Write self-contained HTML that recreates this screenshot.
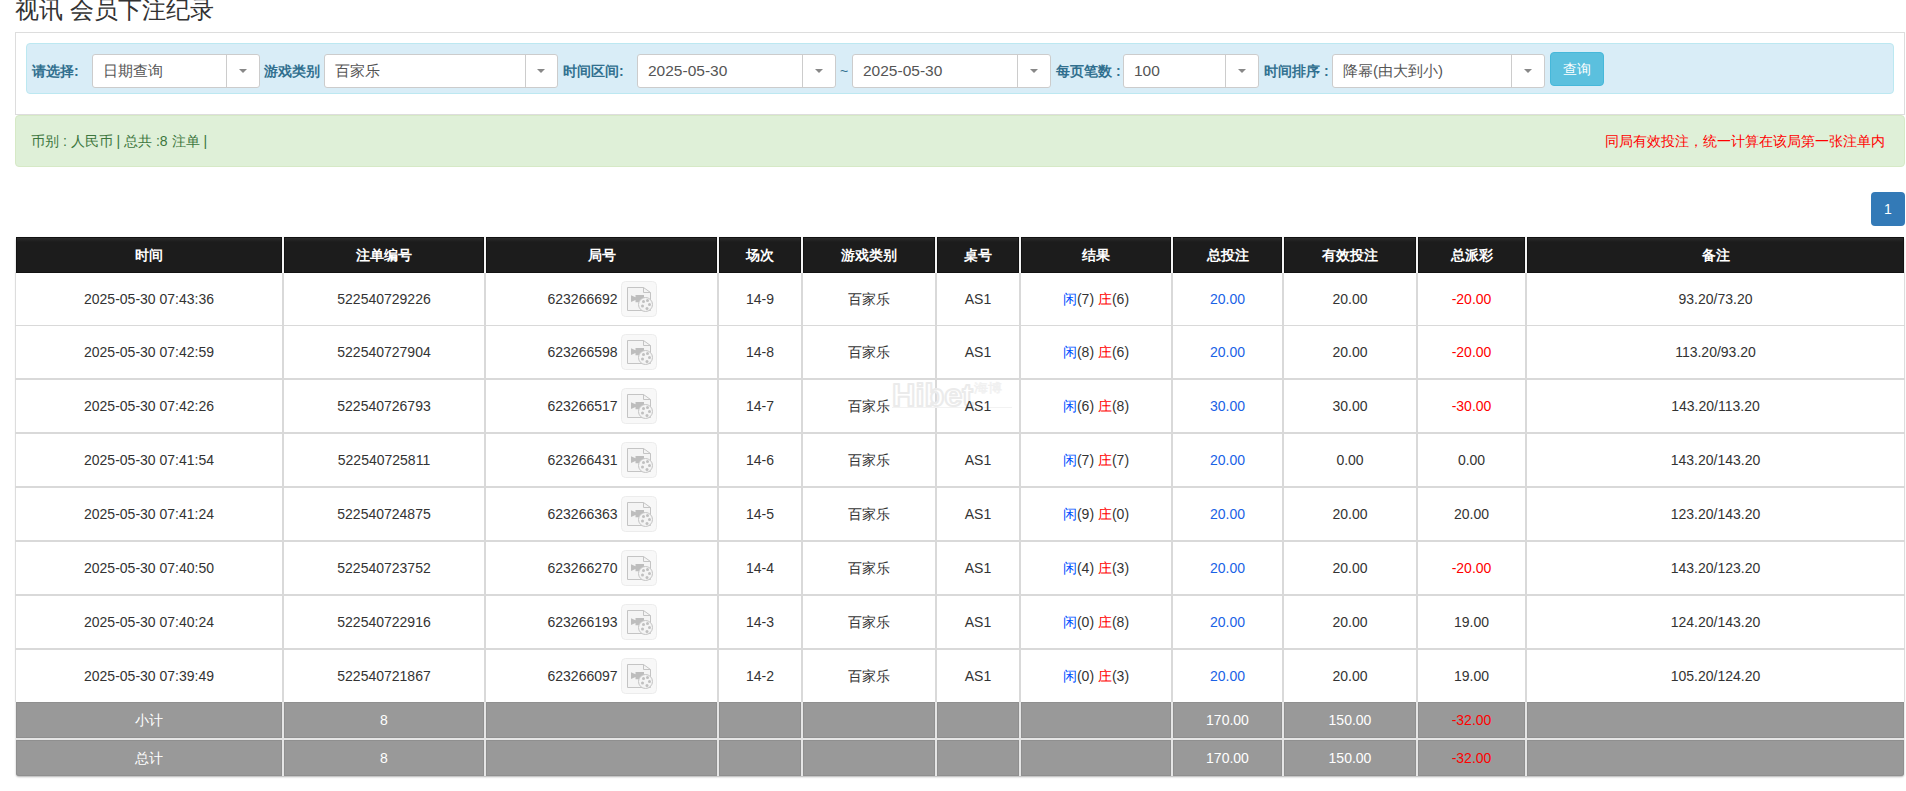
<!DOCTYPE html>
<html><head><meta charset="utf-8">
<style>
html,body{margin:0;padding:0;background:#fff;}
body{width:1906px;height:791px;overflow:hidden;position:relative;font-family:"Liberation Sans",sans-serif;font-size:14px;color:#333;}
.a{position:absolute;}
.title{left:15px;top:-4px;font-size:24px;line-height:28px;color:#333;white-space:nowrap;}
.panel{left:15px;top:32px;width:1888px;height:81px;border:1px solid #ddd;background:#fff;}
.well{left:26px;top:43px;width:1866px;height:49px;border:1px solid #bce8f1;border-radius:4px;background:#d9edf7;}
.lbl{font-weight:bold;color:#31708f;font-size:14px;line-height:20px;top:61px;white-space:nowrap;}
.sel{top:54px;height:32px;border:1px solid #ccc;border-radius:3px;background:#fff;}
.sel .t{position:absolute;left:10px;top:0;line-height:32px;font-size:15.5px;color:#555;white-space:nowrap;}
.sel .s{position:absolute;top:0;bottom:0;width:1px;background:#ccc;}
.sel .c{position:absolute;top:14px;width:0;height:0;border-left:4px solid transparent;border-right:4px solid transparent;border-top:4px solid #888;}
.btn{left:1550px;top:52px;width:52px;height:32px;border:1px solid #46b8da;border-radius:4px;background:#5bc0de;color:#fff;font-size:14px;line-height:32px;text-align:center;}
.alert{left:15px;top:115px;width:1888px;height:50px;border:1px solid #d6e9c6;border-radius:4px;background:#dff0d8;}
.pg{left:1871px;top:192px;width:34px;height:34px;border-radius:4px;background:#337ab7;color:#fff;font-size:14px;line-height:34px;text-align:center;}
.th{top:237px;height:36px;line-height:36px;background:linear-gradient(#1c1c1c 1px,#2b2b2b 1px,#1c1c1c 5px);box-shadow:inset 0 0 0 1px #121212;color:#fff;font-weight:bold;text-align:center;font-size:14px;}
.td{text-align:center;color:#333;font-size:14px;white-space:nowrap;}
.tf{height:36px;line-height:36px;background:#999;box-shadow:inset 0 0 0 1px #8f8f8f;color:#fff;text-align:center;font-size:14px;}
.b{color:#0050ff}.rd{color:#f00}.bl{color:#1a62e6}
.ic{vertical-align:middle;position:relative;top:-1px;left:1px;}
</style></head><body>
<div class="a title">视讯 会员下注纪录</div>
<div class="a panel"></div>
<div class="a well"></div>

<div class="a lbl" style="left:32px">请选择:</div>
<div class="a sel" style="left:92px;width:166px"><span class="t" style="font-size:15px">日期查询</span><i class="s" style="left:133px"></i><i class="c" style="left:146px"></i></div>
<div class="a lbl" style="left:264px">游戏类别</div>
<div class="a sel" style="left:324px;width:232px"><span class="t" style="font-size:15px">百家乐</span><i class="s" style="left:200px"></i><i class="c" style="left:212px"></i></div>
<div class="a lbl" style="left:563px">时间区间:</div>
<div class="a sel" style="left:637px;width:197px"><span class="t">2025-05-30</span><i class="s" style="left:164px"></i><i class="c" style="left:177px"></i></div>
<div class="a" style="left:840px;top:61px;color:#31708f;font-size:14px;line-height:20px">~</div>
<div class="a sel" style="left:852px;width:197px"><span class="t">2025-05-30</span><i class="s" style="left:164px"></i><i class="c" style="left:177px"></i></div>
<div class="a lbl" style="left:1056px">每页笔数 :</div>
<div class="a sel" style="left:1123px;width:134px"><span class="t">100</span><i class="s" style="left:101px"></i><i class="c" style="left:114px"></i></div>
<div class="a lbl" style="left:1264px">时间排序 :</div>
<div class="a sel" style="left:1332px;width:211px"><span class="t" style="font-size:15px">降幂(由大到小)</span><i class="s" style="left:178px"></i><i class="c" style="left:191px"></i></div>
<div class="a btn">查询</div>

<div class="a alert"></div>
<div class="a" style="left:31px;top:131px;font-size:14px;line-height:20px;color:#3c763d;white-space:nowrap">币别 : 人民币 | 总共 :8 注单 |</div>
<div class="a" style="left:1605px;top:131px;font-size:14px;line-height:20px;color:#f00;white-space:nowrap">同局有效投注，统一计算在该局第一张注单内</div>

<div class="a pg">1</div>

<!--TABLE-->
<div class="a" style="left:16px;top:237px;width:1888px;height:539px;background:#fff;box-shadow:0 1px 2px rgba(0,0,0,.3);border-radius:3px"></div>
<div class="a" style="left:15px;top:272px;width:1px;height:430px;background:#ddd"></div>
<div class="a" style="left:1904px;top:272px;width:1px;height:430px;background:#ddd"></div>
<div class="a" style="left:15px;top:325px;width:1890px;height:1px;background:#d9d9d9"></div>
<div class="a" style="left:15px;top:378px;width:1890px;height:2px;background:#d9d9d9"></div>
<div class="a" style="left:15px;top:432px;width:1890px;height:2px;background:#d9d9d9"></div>
<div class="a" style="left:15px;top:486px;width:1890px;height:2px;background:#d9d9d9"></div>
<div class="a" style="left:15px;top:540px;width:1890px;height:2px;background:#d9d9d9"></div>
<div class="a" style="left:15px;top:594px;width:1890px;height:2px;background:#d9d9d9"></div>
<div class="a" style="left:15px;top:648px;width:1890px;height:2px;background:#d9d9d9"></div>
<div class="a" style="left:282px;top:272px;width:2px;height:430px;background:#d9d9d9"></div>
<div class="a" style="left:484px;top:272px;width:2px;height:430px;background:#d9d9d9"></div>
<div class="a" style="left:717px;top:272px;width:2px;height:430px;background:#d9d9d9"></div>
<div class="a" style="left:801px;top:272px;width:2px;height:430px;background:#d9d9d9"></div>
<div class="a" style="left:935px;top:272px;width:2px;height:430px;background:#d9d9d9"></div>
<div class="a" style="left:1019px;top:272px;width:2px;height:430px;background:#d9d9d9"></div>
<div class="a" style="left:1171px;top:272px;width:2px;height:430px;background:#d9d9d9"></div>
<div class="a" style="left:1282px;top:272px;width:2px;height:430px;background:#d9d9d9"></div>
<div class="a" style="left:1416px;top:272px;width:2px;height:430px;background:#d9d9d9"></div>
<div class="a" style="left:1525px;top:272px;width:2px;height:430px;background:#d9d9d9"></div>
<svg class="a" style="left:885px;top:376px" width="135" height="36" viewBox="0 0 135 36"><text x="7" y="30" font-family="Liberation Sans" font-weight="bold" font-size="31" textLength="81" lengthAdjust="spacingAndGlyphs" fill="rgba(255,255,255,.8)" stroke="#ebebeb" stroke-width="2" stroke-linejoin="round">Hibet</text><text x="89" y="16" font-family="Liberation Sans,sans-serif" font-size="12" textLength="28" lengthAdjust="spacingAndGlyphs" fill="rgba(255,255,255,.8)" stroke="#f0f0f0" stroke-width="0.6">海博</text><line x1="7" y1="31.5" x2="127" y2="31.5" stroke="#f2f2f2" stroke-width="1"/></svg>
<div class="a th" style="left:16px;width:266px">时间</div>
<div class="a th" style="left:284px;width:200px">注单编号</div>
<div class="a th" style="left:486px;width:231px">局号</div>
<div class="a th" style="left:719px;width:82px">场次</div>
<div class="a th" style="left:803px;width:132px">游戏类别</div>
<div class="a th" style="left:937px;width:82px">桌号</div>
<div class="a th" style="left:1021px;width:150px">结果</div>
<div class="a th" style="left:1173px;width:109px">总投注</div>
<div class="a th" style="left:1284px;width:132px">有效投注</div>
<div class="a th" style="left:1418px;width:107px">总派彩</div>
<div class="a th" style="left:1527px;width:377px">备注</div>
<div class="a" style="left:282px;top:237px;width:2px;height:36px;background:#f4f4f4"></div>
<div class="a" style="left:484px;top:237px;width:2px;height:36px;background:#f4f4f4"></div>
<div class="a" style="left:717px;top:237px;width:2px;height:36px;background:#f4f4f4"></div>
<div class="a" style="left:801px;top:237px;width:2px;height:36px;background:#f4f4f4"></div>
<div class="a" style="left:935px;top:237px;width:2px;height:36px;background:#f4f4f4"></div>
<div class="a" style="left:1019px;top:237px;width:2px;height:36px;background:#f4f4f4"></div>
<div class="a" style="left:1171px;top:237px;width:2px;height:36px;background:#f4f4f4"></div>
<div class="a" style="left:1282px;top:237px;width:2px;height:36px;background:#f4f4f4"></div>
<div class="a" style="left:1416px;top:237px;width:2px;height:36px;background:#f4f4f4"></div>
<div class="a" style="left:1525px;top:237px;width:2px;height:36px;background:#f4f4f4"></div>
<div class="a td" style="left:16px;top:273px;width:266px;height:52px;line-height:52px">2025-05-30 07:43:36</div>
<div class="a td" style="left:284px;top:273px;width:200px;height:52px;line-height:52px">522540729226</div>
<div class="a td" style="left:486px;top:273px;width:231px;height:52px;line-height:52px"><span style="position:relative;left:1px">623266692</span> <svg class="ic" width="36" height="36" viewBox="0 0 36 36"><rect x="0.5" y="0.5" width="35" height="35" rx="4" fill="#f8f8f8" stroke="#ececec"/><path d="M6.5 6.5H22.5L29.5 11.5V29.5H6.5Z" fill="#f4f4f4" stroke="#c4c4c4"/><path d="M22.5 6.5V11.5H29.5" fill="none" stroke="#c4c4c4"/><path d="M10 14.2L14.5 16.3V14H23V21.2H14.5V19L10 21Z" fill="#bdbdbd"/><circle cx="24.5" cy="23.5" r="7" fill="#f4f4f4" stroke="#c4c4c4"/><circle cx="22.5" cy="20.5" r="1.5" fill="#c0c0c0"/><circle cx="26.5" cy="19.5" r="1.5" fill="#c0c0c0"/><circle cx="28.5" cy="23.5" r="1.5" fill="#c0c0c0"/><circle cx="26" cy="27.5" r="1.5" fill="#c0c0c0"/><circle cx="21.5" cy="25" r="1.5" fill="#c0c0c0"/></svg></div>
<div class="a td" style="left:719px;top:273px;width:82px;height:52px;line-height:52px">14-9</div>
<div class="a td" style="left:803px;top:273px;width:132px;height:52px;line-height:52px">百家乐</div>
<div class="a td" style="left:937px;top:273px;width:82px;height:52px;line-height:52px">AS1</div>
<div class="a td" style="left:1021px;top:273px;width:150px;height:52px;line-height:52px"><span class="b">闲</span>(7) <span class="rd">庄</span>(6)</div>
<div class="a td" style="left:1173px;top:273px;width:109px;height:52px;line-height:52px"><span class="bl">20.00</span></div>
<div class="a td" style="left:1284px;top:273px;width:132px;height:52px;line-height:52px">20.00</div>
<div class="a td" style="left:1418px;top:273px;width:107px;height:52px;line-height:52px"><span class="rd">-20.00</span></div>
<div class="a td" style="left:1527px;top:273px;width:377px;height:52px;line-height:52px">93.20/73.20</div>
<div class="a td" style="left:16px;top:326px;width:266px;height:52px;line-height:52px">2025-05-30 07:42:59</div>
<div class="a td" style="left:284px;top:326px;width:200px;height:52px;line-height:52px">522540727904</div>
<div class="a td" style="left:486px;top:326px;width:231px;height:52px;line-height:52px"><span style="position:relative;left:1px">623266598</span> <svg class="ic" width="36" height="36" viewBox="0 0 36 36"><rect x="0.5" y="0.5" width="35" height="35" rx="4" fill="#f8f8f8" stroke="#ececec"/><path d="M6.5 6.5H22.5L29.5 11.5V29.5H6.5Z" fill="#f4f4f4" stroke="#c4c4c4"/><path d="M22.5 6.5V11.5H29.5" fill="none" stroke="#c4c4c4"/><path d="M10 14.2L14.5 16.3V14H23V21.2H14.5V19L10 21Z" fill="#bdbdbd"/><circle cx="24.5" cy="23.5" r="7" fill="#f4f4f4" stroke="#c4c4c4"/><circle cx="22.5" cy="20.5" r="1.5" fill="#c0c0c0"/><circle cx="26.5" cy="19.5" r="1.5" fill="#c0c0c0"/><circle cx="28.5" cy="23.5" r="1.5" fill="#c0c0c0"/><circle cx="26" cy="27.5" r="1.5" fill="#c0c0c0"/><circle cx="21.5" cy="25" r="1.5" fill="#c0c0c0"/></svg></div>
<div class="a td" style="left:719px;top:326px;width:82px;height:52px;line-height:52px">14-8</div>
<div class="a td" style="left:803px;top:326px;width:132px;height:52px;line-height:52px">百家乐</div>
<div class="a td" style="left:937px;top:326px;width:82px;height:52px;line-height:52px">AS1</div>
<div class="a td" style="left:1021px;top:326px;width:150px;height:52px;line-height:52px"><span class="b">闲</span>(8) <span class="rd">庄</span>(6)</div>
<div class="a td" style="left:1173px;top:326px;width:109px;height:52px;line-height:52px"><span class="bl">20.00</span></div>
<div class="a td" style="left:1284px;top:326px;width:132px;height:52px;line-height:52px">20.00</div>
<div class="a td" style="left:1418px;top:326px;width:107px;height:52px;line-height:52px"><span class="rd">-20.00</span></div>
<div class="a td" style="left:1527px;top:326px;width:377px;height:52px;line-height:52px">113.20/93.20</div>
<div class="a td" style="left:16px;top:380px;width:266px;height:52px;line-height:52px">2025-05-30 07:42:26</div>
<div class="a td" style="left:284px;top:380px;width:200px;height:52px;line-height:52px">522540726793</div>
<div class="a td" style="left:486px;top:380px;width:231px;height:52px;line-height:52px"><span style="position:relative;left:1px">623266517</span> <svg class="ic" width="36" height="36" viewBox="0 0 36 36"><rect x="0.5" y="0.5" width="35" height="35" rx="4" fill="#f8f8f8" stroke="#ececec"/><path d="M6.5 6.5H22.5L29.5 11.5V29.5H6.5Z" fill="#f4f4f4" stroke="#c4c4c4"/><path d="M22.5 6.5V11.5H29.5" fill="none" stroke="#c4c4c4"/><path d="M10 14.2L14.5 16.3V14H23V21.2H14.5V19L10 21Z" fill="#bdbdbd"/><circle cx="24.5" cy="23.5" r="7" fill="#f4f4f4" stroke="#c4c4c4"/><circle cx="22.5" cy="20.5" r="1.5" fill="#c0c0c0"/><circle cx="26.5" cy="19.5" r="1.5" fill="#c0c0c0"/><circle cx="28.5" cy="23.5" r="1.5" fill="#c0c0c0"/><circle cx="26" cy="27.5" r="1.5" fill="#c0c0c0"/><circle cx="21.5" cy="25" r="1.5" fill="#c0c0c0"/></svg></div>
<div class="a td" style="left:719px;top:380px;width:82px;height:52px;line-height:52px">14-7</div>
<div class="a td" style="left:803px;top:380px;width:132px;height:52px;line-height:52px">百家乐</div>
<div class="a td" style="left:937px;top:380px;width:82px;height:52px;line-height:52px">AS1</div>
<div class="a td" style="left:1021px;top:380px;width:150px;height:52px;line-height:52px"><span class="b">闲</span>(6) <span class="rd">庄</span>(8)</div>
<div class="a td" style="left:1173px;top:380px;width:109px;height:52px;line-height:52px"><span class="bl">30.00</span></div>
<div class="a td" style="left:1284px;top:380px;width:132px;height:52px;line-height:52px">30.00</div>
<div class="a td" style="left:1418px;top:380px;width:107px;height:52px;line-height:52px"><span class="rd">-30.00</span></div>
<div class="a td" style="left:1527px;top:380px;width:377px;height:52px;line-height:52px">143.20/113.20</div>
<div class="a td" style="left:16px;top:434px;width:266px;height:52px;line-height:52px">2025-05-30 07:41:54</div>
<div class="a td" style="left:284px;top:434px;width:200px;height:52px;line-height:52px">522540725811</div>
<div class="a td" style="left:486px;top:434px;width:231px;height:52px;line-height:52px"><span style="position:relative;left:1px">623266431</span> <svg class="ic" width="36" height="36" viewBox="0 0 36 36"><rect x="0.5" y="0.5" width="35" height="35" rx="4" fill="#f8f8f8" stroke="#ececec"/><path d="M6.5 6.5H22.5L29.5 11.5V29.5H6.5Z" fill="#f4f4f4" stroke="#c4c4c4"/><path d="M22.5 6.5V11.5H29.5" fill="none" stroke="#c4c4c4"/><path d="M10 14.2L14.5 16.3V14H23V21.2H14.5V19L10 21Z" fill="#bdbdbd"/><circle cx="24.5" cy="23.5" r="7" fill="#f4f4f4" stroke="#c4c4c4"/><circle cx="22.5" cy="20.5" r="1.5" fill="#c0c0c0"/><circle cx="26.5" cy="19.5" r="1.5" fill="#c0c0c0"/><circle cx="28.5" cy="23.5" r="1.5" fill="#c0c0c0"/><circle cx="26" cy="27.5" r="1.5" fill="#c0c0c0"/><circle cx="21.5" cy="25" r="1.5" fill="#c0c0c0"/></svg></div>
<div class="a td" style="left:719px;top:434px;width:82px;height:52px;line-height:52px">14-6</div>
<div class="a td" style="left:803px;top:434px;width:132px;height:52px;line-height:52px">百家乐</div>
<div class="a td" style="left:937px;top:434px;width:82px;height:52px;line-height:52px">AS1</div>
<div class="a td" style="left:1021px;top:434px;width:150px;height:52px;line-height:52px"><span class="b">闲</span>(7) <span class="rd">庄</span>(7)</div>
<div class="a td" style="left:1173px;top:434px;width:109px;height:52px;line-height:52px"><span class="bl">20.00</span></div>
<div class="a td" style="left:1284px;top:434px;width:132px;height:52px;line-height:52px">0.00</div>
<div class="a td" style="left:1418px;top:434px;width:107px;height:52px;line-height:52px">0.00</div>
<div class="a td" style="left:1527px;top:434px;width:377px;height:52px;line-height:52px">143.20/143.20</div>
<div class="a td" style="left:16px;top:488px;width:266px;height:52px;line-height:52px">2025-05-30 07:41:24</div>
<div class="a td" style="left:284px;top:488px;width:200px;height:52px;line-height:52px">522540724875</div>
<div class="a td" style="left:486px;top:488px;width:231px;height:52px;line-height:52px"><span style="position:relative;left:1px">623266363</span> <svg class="ic" width="36" height="36" viewBox="0 0 36 36"><rect x="0.5" y="0.5" width="35" height="35" rx="4" fill="#f8f8f8" stroke="#ececec"/><path d="M6.5 6.5H22.5L29.5 11.5V29.5H6.5Z" fill="#f4f4f4" stroke="#c4c4c4"/><path d="M22.5 6.5V11.5H29.5" fill="none" stroke="#c4c4c4"/><path d="M10 14.2L14.5 16.3V14H23V21.2H14.5V19L10 21Z" fill="#bdbdbd"/><circle cx="24.5" cy="23.5" r="7" fill="#f4f4f4" stroke="#c4c4c4"/><circle cx="22.5" cy="20.5" r="1.5" fill="#c0c0c0"/><circle cx="26.5" cy="19.5" r="1.5" fill="#c0c0c0"/><circle cx="28.5" cy="23.5" r="1.5" fill="#c0c0c0"/><circle cx="26" cy="27.5" r="1.5" fill="#c0c0c0"/><circle cx="21.5" cy="25" r="1.5" fill="#c0c0c0"/></svg></div>
<div class="a td" style="left:719px;top:488px;width:82px;height:52px;line-height:52px">14-5</div>
<div class="a td" style="left:803px;top:488px;width:132px;height:52px;line-height:52px">百家乐</div>
<div class="a td" style="left:937px;top:488px;width:82px;height:52px;line-height:52px">AS1</div>
<div class="a td" style="left:1021px;top:488px;width:150px;height:52px;line-height:52px"><span class="b">闲</span>(9) <span class="rd">庄</span>(0)</div>
<div class="a td" style="left:1173px;top:488px;width:109px;height:52px;line-height:52px"><span class="bl">20.00</span></div>
<div class="a td" style="left:1284px;top:488px;width:132px;height:52px;line-height:52px">20.00</div>
<div class="a td" style="left:1418px;top:488px;width:107px;height:52px;line-height:52px">20.00</div>
<div class="a td" style="left:1527px;top:488px;width:377px;height:52px;line-height:52px">123.20/143.20</div>
<div class="a td" style="left:16px;top:542px;width:266px;height:52px;line-height:52px">2025-05-30 07:40:50</div>
<div class="a td" style="left:284px;top:542px;width:200px;height:52px;line-height:52px">522540723752</div>
<div class="a td" style="left:486px;top:542px;width:231px;height:52px;line-height:52px"><span style="position:relative;left:1px">623266270</span> <svg class="ic" width="36" height="36" viewBox="0 0 36 36"><rect x="0.5" y="0.5" width="35" height="35" rx="4" fill="#f8f8f8" stroke="#ececec"/><path d="M6.5 6.5H22.5L29.5 11.5V29.5H6.5Z" fill="#f4f4f4" stroke="#c4c4c4"/><path d="M22.5 6.5V11.5H29.5" fill="none" stroke="#c4c4c4"/><path d="M10 14.2L14.5 16.3V14H23V21.2H14.5V19L10 21Z" fill="#bdbdbd"/><circle cx="24.5" cy="23.5" r="7" fill="#f4f4f4" stroke="#c4c4c4"/><circle cx="22.5" cy="20.5" r="1.5" fill="#c0c0c0"/><circle cx="26.5" cy="19.5" r="1.5" fill="#c0c0c0"/><circle cx="28.5" cy="23.5" r="1.5" fill="#c0c0c0"/><circle cx="26" cy="27.5" r="1.5" fill="#c0c0c0"/><circle cx="21.5" cy="25" r="1.5" fill="#c0c0c0"/></svg></div>
<div class="a td" style="left:719px;top:542px;width:82px;height:52px;line-height:52px">14-4</div>
<div class="a td" style="left:803px;top:542px;width:132px;height:52px;line-height:52px">百家乐</div>
<div class="a td" style="left:937px;top:542px;width:82px;height:52px;line-height:52px">AS1</div>
<div class="a td" style="left:1021px;top:542px;width:150px;height:52px;line-height:52px"><span class="b">闲</span>(4) <span class="rd">庄</span>(3)</div>
<div class="a td" style="left:1173px;top:542px;width:109px;height:52px;line-height:52px"><span class="bl">20.00</span></div>
<div class="a td" style="left:1284px;top:542px;width:132px;height:52px;line-height:52px">20.00</div>
<div class="a td" style="left:1418px;top:542px;width:107px;height:52px;line-height:52px"><span class="rd">-20.00</span></div>
<div class="a td" style="left:1527px;top:542px;width:377px;height:52px;line-height:52px">143.20/123.20</div>
<div class="a td" style="left:16px;top:596px;width:266px;height:52px;line-height:52px">2025-05-30 07:40:24</div>
<div class="a td" style="left:284px;top:596px;width:200px;height:52px;line-height:52px">522540722916</div>
<div class="a td" style="left:486px;top:596px;width:231px;height:52px;line-height:52px"><span style="position:relative;left:1px">623266193</span> <svg class="ic" width="36" height="36" viewBox="0 0 36 36"><rect x="0.5" y="0.5" width="35" height="35" rx="4" fill="#f8f8f8" stroke="#ececec"/><path d="M6.5 6.5H22.5L29.5 11.5V29.5H6.5Z" fill="#f4f4f4" stroke="#c4c4c4"/><path d="M22.5 6.5V11.5H29.5" fill="none" stroke="#c4c4c4"/><path d="M10 14.2L14.5 16.3V14H23V21.2H14.5V19L10 21Z" fill="#bdbdbd"/><circle cx="24.5" cy="23.5" r="7" fill="#f4f4f4" stroke="#c4c4c4"/><circle cx="22.5" cy="20.5" r="1.5" fill="#c0c0c0"/><circle cx="26.5" cy="19.5" r="1.5" fill="#c0c0c0"/><circle cx="28.5" cy="23.5" r="1.5" fill="#c0c0c0"/><circle cx="26" cy="27.5" r="1.5" fill="#c0c0c0"/><circle cx="21.5" cy="25" r="1.5" fill="#c0c0c0"/></svg></div>
<div class="a td" style="left:719px;top:596px;width:82px;height:52px;line-height:52px">14-3</div>
<div class="a td" style="left:803px;top:596px;width:132px;height:52px;line-height:52px">百家乐</div>
<div class="a td" style="left:937px;top:596px;width:82px;height:52px;line-height:52px">AS1</div>
<div class="a td" style="left:1021px;top:596px;width:150px;height:52px;line-height:52px"><span class="b">闲</span>(0) <span class="rd">庄</span>(8)</div>
<div class="a td" style="left:1173px;top:596px;width:109px;height:52px;line-height:52px"><span class="bl">20.00</span></div>
<div class="a td" style="left:1284px;top:596px;width:132px;height:52px;line-height:52px">20.00</div>
<div class="a td" style="left:1418px;top:596px;width:107px;height:52px;line-height:52px">19.00</div>
<div class="a td" style="left:1527px;top:596px;width:377px;height:52px;line-height:52px">124.20/143.20</div>
<div class="a td" style="left:16px;top:650px;width:266px;height:52px;line-height:52px">2025-05-30 07:39:49</div>
<div class="a td" style="left:284px;top:650px;width:200px;height:52px;line-height:52px">522540721867</div>
<div class="a td" style="left:486px;top:650px;width:231px;height:52px;line-height:52px"><span style="position:relative;left:1px">623266097</span> <svg class="ic" width="36" height="36" viewBox="0 0 36 36"><rect x="0.5" y="0.5" width="35" height="35" rx="4" fill="#f8f8f8" stroke="#ececec"/><path d="M6.5 6.5H22.5L29.5 11.5V29.5H6.5Z" fill="#f4f4f4" stroke="#c4c4c4"/><path d="M22.5 6.5V11.5H29.5" fill="none" stroke="#c4c4c4"/><path d="M10 14.2L14.5 16.3V14H23V21.2H14.5V19L10 21Z" fill="#bdbdbd"/><circle cx="24.5" cy="23.5" r="7" fill="#f4f4f4" stroke="#c4c4c4"/><circle cx="22.5" cy="20.5" r="1.5" fill="#c0c0c0"/><circle cx="26.5" cy="19.5" r="1.5" fill="#c0c0c0"/><circle cx="28.5" cy="23.5" r="1.5" fill="#c0c0c0"/><circle cx="26" cy="27.5" r="1.5" fill="#c0c0c0"/><circle cx="21.5" cy="25" r="1.5" fill="#c0c0c0"/></svg></div>
<div class="a td" style="left:719px;top:650px;width:82px;height:52px;line-height:52px">14-2</div>
<div class="a td" style="left:803px;top:650px;width:132px;height:52px;line-height:52px">百家乐</div>
<div class="a td" style="left:937px;top:650px;width:82px;height:52px;line-height:52px">AS1</div>
<div class="a td" style="left:1021px;top:650px;width:150px;height:52px;line-height:52px"><span class="b">闲</span>(0) <span class="rd">庄</span>(3)</div>
<div class="a td" style="left:1173px;top:650px;width:109px;height:52px;line-height:52px"><span class="bl">20.00</span></div>
<div class="a td" style="left:1284px;top:650px;width:132px;height:52px;line-height:52px">20.00</div>
<div class="a td" style="left:1418px;top:650px;width:107px;height:52px;line-height:52px">19.00</div>
<div class="a td" style="left:1527px;top:650px;width:377px;height:52px;line-height:52px">105.20/124.20</div>
<div class="a tf" style="left:16px;top:702px;width:266px;">小计</div>
<div class="a tf" style="left:284px;top:702px;width:200px;">8</div>
<div class="a tf" style="left:486px;top:702px;width:231px;"></div>
<div class="a tf" style="left:719px;top:702px;width:82px;"></div>
<div class="a tf" style="left:803px;top:702px;width:132px;"></div>
<div class="a tf" style="left:937px;top:702px;width:82px;"></div>
<div class="a tf" style="left:1021px;top:702px;width:150px;"></div>
<div class="a tf" style="left:1173px;top:702px;width:109px;">170.00</div>
<div class="a tf" style="left:1284px;top:702px;width:132px;">150.00</div>
<div class="a tf" style="left:1418px;top:702px;width:107px;"><span class="rd">-32.00</span></div>
<div class="a tf" style="left:1527px;top:702px;width:377px;"></div>
<div class="a" style="left:282px;top:702px;width:2px;height:36px;background:#e5e5e5"></div>
<div class="a" style="left:484px;top:702px;width:2px;height:36px;background:#e5e5e5"></div>
<div class="a" style="left:717px;top:702px;width:2px;height:36px;background:#e5e5e5"></div>
<div class="a" style="left:801px;top:702px;width:2px;height:36px;background:#e5e5e5"></div>
<div class="a" style="left:935px;top:702px;width:2px;height:36px;background:#e5e5e5"></div>
<div class="a" style="left:1019px;top:702px;width:2px;height:36px;background:#e5e5e5"></div>
<div class="a" style="left:1171px;top:702px;width:2px;height:36px;background:#e5e5e5"></div>
<div class="a" style="left:1282px;top:702px;width:2px;height:36px;background:#e5e5e5"></div>
<div class="a" style="left:1416px;top:702px;width:2px;height:36px;background:#e5e5e5"></div>
<div class="a" style="left:1525px;top:702px;width:2px;height:36px;background:#e5e5e5"></div>
<div class="a tf" style="left:16px;top:740px;width:266px;border-bottom-left-radius:3px;">总计</div>
<div class="a tf" style="left:284px;top:740px;width:200px;">8</div>
<div class="a tf" style="left:486px;top:740px;width:231px;"></div>
<div class="a tf" style="left:719px;top:740px;width:82px;"></div>
<div class="a tf" style="left:803px;top:740px;width:132px;"></div>
<div class="a tf" style="left:937px;top:740px;width:82px;"></div>
<div class="a tf" style="left:1021px;top:740px;width:150px;"></div>
<div class="a tf" style="left:1173px;top:740px;width:109px;">170.00</div>
<div class="a tf" style="left:1284px;top:740px;width:132px;">150.00</div>
<div class="a tf" style="left:1418px;top:740px;width:107px;"><span class="rd">-32.00</span></div>
<div class="a tf" style="left:1527px;top:740px;width:377px;border-bottom-right-radius:3px;"></div>
<div class="a" style="left:282px;top:740px;width:2px;height:36px;background:#e5e5e5"></div>
<div class="a" style="left:484px;top:740px;width:2px;height:36px;background:#e5e5e5"></div>
<div class="a" style="left:717px;top:740px;width:2px;height:36px;background:#e5e5e5"></div>
<div class="a" style="left:801px;top:740px;width:2px;height:36px;background:#e5e5e5"></div>
<div class="a" style="left:935px;top:740px;width:2px;height:36px;background:#e5e5e5"></div>
<div class="a" style="left:1019px;top:740px;width:2px;height:36px;background:#e5e5e5"></div>
<div class="a" style="left:1171px;top:740px;width:2px;height:36px;background:#e5e5e5"></div>
<div class="a" style="left:1282px;top:740px;width:2px;height:36px;background:#e5e5e5"></div>
<div class="a" style="left:1416px;top:740px;width:2px;height:36px;background:#e5e5e5"></div>
<div class="a" style="left:1525px;top:740px;width:2px;height:36px;background:#e5e5e5"></div>
<div class="a" style="left:16px;top:738px;width:1888px;height:2px;background:#e5e5e5"></div>
</body></html>
